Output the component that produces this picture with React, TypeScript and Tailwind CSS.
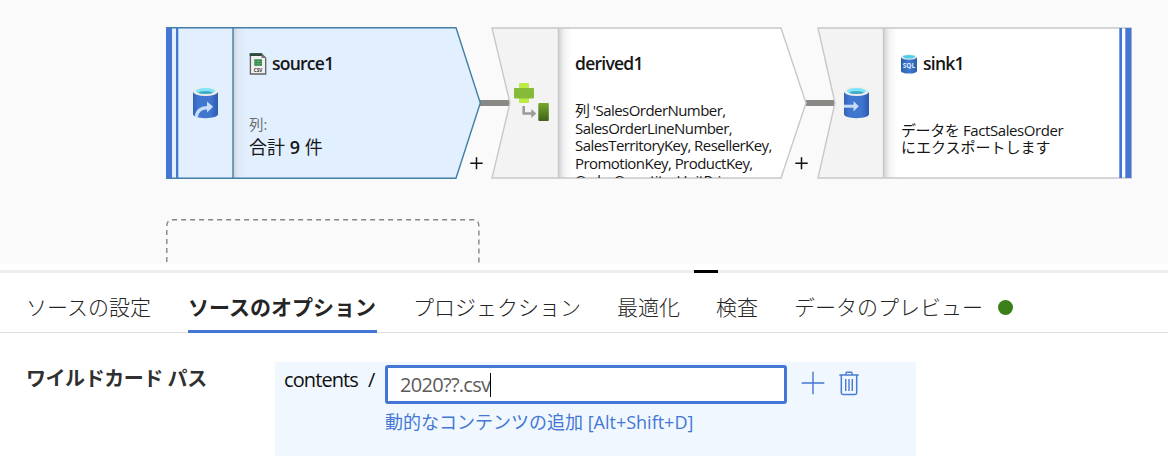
import type { ReactNode } from "react";

const latin = "font-['Open_Sans','Noto_Sans_CJK_JP',sans-serif]";
const nodeTitle = "font-['Open_Sans',sans-serif] h-[22px] text-[17.500px] font-semibold leading-[20px] tracking-[-0.75px]";

function Cylinder({ id, children }: { id: string; children?: ReactNode }) {
  return (
    <svg viewBox="0 0 25 32" className="h-8 w-[25px]">
      <defs>
        <linearGradient id={id}>
          <stop offset="0" stopColor="#3561b4" />
          <stop offset=".2" stopColor="#4075d0" />
          <stop offset=".7" stopColor="#4075d0" />
          <stop offset="1" stopColor="#2f5caf" />
        </linearGradient>
      </defs>
      <path d="M0 5V27.300C0 29.600 5.600 31.200 12.500 31.200S25 29.600 25 27.300V5Z" fill={`url(#${id})`} />
      <ellipse cx="12.500" cy="4.500" rx="12.400" ry="4.500" fill="#ececeb" />
      <ellipse cx="12.500" cy="4" rx="9.700" ry="2.900" fill="#7fe6fa" />
      <path d="M5 5.700C8 3.900 17 3.900 20 5.700C17 7.300 8 7.300 5 5.700Z" fill="#3fa6c4" />
      {children}
    </svg>
  );
}

function CsvIcon() {
  return (
    <svg viewBox="0 0 18 22" className="h-[22px] w-[18px]">
      <path d="M1.400 1H12.500L16.700 5V21H1.400Z" fill="#f0f0ef" stroke="#5d6161" strokeWidth="1.300" />
      <path d="M.7.300H12.800L14.200 3H.7Z" fill="#2c4a3a" />
      <path d="M12.500 1V5H16.700Z" fill="#777" />
      <rect x="5.300" y="6.300" width="7.700" height="6.500" fill="#2f8a4a" />
      <path d="M5.300 8.500H13M5.300 10.700H13M9.200 6.300V12.800" stroke="#6db681" strokeWidth=".6" />
      <text x="9" y="18.500" textAnchor="middle" fontSize="4.600" fontWeight="700" fontFamily="Open Sans" fill="#333">CSV</text>
    </svg>
  );
}

function SqlIcon() {
  return (
    <svg viewBox="0 0 16 20" className="h-5 w-4">
      <defs>
        <linearGradient id="sql">
          <stop offset="0" stopColor="#2b5fae" />
          <stop offset=".5" stopColor="#3f7ad0" />
          <stop offset="1" stopColor="#2b5fae" />
        </linearGradient>
      </defs>
      <path d="M0 3V17C0 18.500 3.600 19.600 8 19.600S16 18.500 16 17V3Z" fill="url(#sql)" />
      <ellipse cx="8" cy="3" rx="8" ry="2.800" fill="#e4ebee" />
      <ellipse cx="8" cy="2.700" rx="6" ry="1.800" fill="#4fcde5" />
      <text x="8" y="13.500" textAnchor="middle" fontSize="6.500" fontWeight="700" fontFamily="Open Sans" fill="#dfeaf8">SQL</text>
    </svg>
  );
}

function DerivedIcon() {
  return (
    <svg viewBox="0 0 36 40" className="h-10 w-9">
      <defs>
        <linearGradient id="leaf" x2="0" y2="1">
          <stop stopColor="#76a82f" />
          <stop offset="1" stopColor="#3f6217" />
        </linearGradient>
      </defs>
      <rect x="5" y="0" width="10" height="20" rx="1" fill="#bcec44" />
      <rect x="0" y="5" width="20" height="10.500" rx="1" fill="#86bb3a" />
      <path d="M9.700 23V30.500H19" fill="none" stroke="#9b9b9b" strokeWidth="2.600" />
      <path d="M17.300 26L22.300 30.500L17.300 35Z" fill="#9b9b9b" />
      <rect x="24.300" y="20" width="10.500" height="18" rx="1" fill="url(#leaf)" />
    </svg>
  );
}

function Plus() {
  return (
    <svg viewBox="0 0 13 13" className="size-[13px]">
      <path d="M6.500 .3V12.300M.3 6.300H12.700" stroke="#111" strokeWidth="1.500" />
    </svg>
  );
}

function Connector() {
  return <div className="h-1.5 w-[30px] bg-[#888884]" />;
}

function Trash() {
  return (
    <svg viewBox="0 0 20 25" className="h-[25px] w-5" fill="none" stroke="#4a7bd2">
      <path d="M.3 4H19.700" strokeWidth="1.500" />
      <path d="M7 4V2.100Q7 1.300 7.800 1.300H12.200Q13 1.300 13 2.100V4" strokeWidth="1.400" />
      <path d="M2.300 4V21.800Q2.300 23.500 4 23.500H16Q17.700 23.500 17.700 21.800V4" strokeWidth="1.500" />
      <path d="M6.700 8V20M10 8V20M13.300 8V20" strokeWidth="1.400" />
    </svg>
  );
}

function Canvas() {
  return (
    <section className="relative h-[264px] overflow-hidden bg-[#fafafa] text-[#161616]">
      <div className="absolute left-[480px] top-[100px]"><Connector /></div>
      <div className="absolute left-[806px] top-[100px]"><Connector /></div>

      <article className="absolute left-[166px] top-[27px] flex h-[152px] w-[316px]">
        <svg viewBox="0 0 316 152" className="absolute inset-0 h-[152px] w-[316px]">
          <defs>
            <linearGradient id="shadeBlue"><stop stopColor="#ccd3dc" /><stop offset=".4" stopColor="#dfe9f5" /><stop offset="1" stopColor="#e1efff" /></linearGradient>
          </defs>
          <path d="M.7.800H290L314.300 76L290 151.200H.7Z" fill="#e1effe" />
          <rect x="67" y="1" width="14" height="150" fill="url(#shadeBlue)" />
          <path d="M.7.800H290L314.300 76L290 151.200H.7Z" fill="none" stroke="#427fa5" strokeWidth="1.400" />
          <path d="M67 1V151" stroke="#427fa5" strokeWidth="1.400" />
          <path d="M0 1H6V151H0ZM10 1H12.300V151H10Z" fill="#4377d3" />
        </svg>
        <div className="relative flex w-[67px] pl-[27px] pt-[60px]">
          <Cylinder id="cylSource">
            <path d="M3.300 30C4 24 8 20.600 14 20.700" fill="none" stroke="#c7dcf7" strokeWidth="3.400" />
            <path d="M14 14.500L20.200 19.800L14 25.500Z" fill="#c7dcf7" />
          </Cylinder>
        </div>
        <div className="relative pl-[16px] pt-[26px]">
          <div className="flex h-[22px] items-center gap-[5px]">
            <CsvIcon />
            <h2 className={nodeTitle}>source1</h2>
          </div>
          <p className={`${latin} mt-[41px] text-[14.500px] leading-[18px] text-[#6c6c6c]`}>列:</p>
          <p className={`${latin} mt-[2px] whitespace-pre text-[18px] leading-[22px]`}>合計 <b className="font-semibold">9</b> 件</p>
        </div>
      </article>
      <div className="absolute left-[470px] top-[157px]"><Plus /></div>

      <article className="absolute left-[491px] top-[27px] flex h-[152px] w-[316px] overflow-hidden">
        <svg viewBox="0 0 316 152" className="absolute inset-0 h-[152px] w-[316px]">
          <defs>
            <linearGradient id="shadeGray"><stop stopColor="#d5d5d5" /><stop offset=".4" stopColor="#f2f2f2" /><stop offset="1" stopColor="#fff" /></linearGradient>
          </defs>
          <path d="M1 1H290L315 76L290 151H1L19 76Z" fill="#fff" />
          <path d="M1 1H67V151H1L19 76Z" fill="#f3f3f3" />
          <rect x="68" y="1" width="13" height="150" fill="url(#shadeGray)" />
          <path d="M1 1H290L315 76L290 151H1L19 76ZM67.500 1V151" fill="none" stroke="#c8c8c8" strokeWidth="1.400" />
        </svg>
        <div className="relative w-[68px] pl-[23px] pt-[56px]"><DerivedIcon /></div>
        <div className="relative h-[151px] overflow-hidden pl-[16px] pt-[26px]">
          <h2 className={nodeTitle}>derived1</h2>
          <p className={`${latin} mt-[27px] whitespace-nowrap text-[15px] leading-[17.6px] tracking-[-0.55px]`}>
            列 'SalesOrderNumber,<br />SalesOrderLineNumber,<br />SalesTerritoryKey, ResellerKey,<br />PromotionKey, ProductKey,<br />OrderQuantity, UnitPrice,
          </p>
        </div>
      </article>
      <div className="absolute left-[795px] top-[157px]"><Plus /></div>

      <article className="absolute left-[817px] top-[27px] flex h-[152px] w-[316px]">
        <svg viewBox="0 0 316 152" className="absolute inset-0 h-[152px] w-[316px]">
          <path d="M1 1H314.300V151H1L18 76Z" fill="#fff" />
          <path d="M1 1H66.500V151H1L18 76Z" fill="#f3f3f3" />
          <rect x="67" y="1" width="13" height="150" fill="url(#shadeGray)" />
          <path d="M1 1H314.300V151H1L18 76ZM66.500 1V151" fill="none" stroke="#c8c8c8" strokeWidth="1.400" />
          <path d="M302.300 1H305V151H302.300ZM308.300 1H314.300V151H308.300Z" fill="#4377d3" />
        </svg>
        <div className="relative w-[67px] pl-[27px] pt-[60px]">
          <Cylinder id="cylSink">
            <path d="M0 17.700H10V20.700H0Z" fill="#c7dcf7" />
            <path d="M9.500 13.900L14.800 19.200L9.500 24.500Z" fill="#c7dcf7" />
          </Cylinder>
        </div>
        <div className="relative pl-[17px] pt-[26px]">
          <div className="flex h-[22px] items-center gap-[6px]">
            <SqlIcon />
            <h2 className={nodeTitle}>sink1</h2>
          </div>
          <p className={`${latin} mt-[47px] whitespace-nowrap text-[15px] leading-[17px] tracking-[-0.4px]`}>データを FactSalesOrder<br /><span className="tracking-[0]">にエクスポートします</span></p>
        </div>
      </article>

      <svg viewBox="0 0 316 46" className="absolute left-[165px] top-[218px] h-[46px] w-[316px]">
        <path d="M1.800 46V8Q1.800 1.700 8 1.700H307.500Q313.900 1.700 313.900 8V46" fill="none" stroke="#858585" strokeWidth="1.400" strokeDasharray="5 4" strokeDashoffset="7" />
      </svg>
    </section>
  );
}

function Tabs() {
  const item = "flex h-[59px] items-center whitespace-nowrap pt-[6px] text-[21px] leading-[30px]";
  return (
    <nav className="flex h-[60px] gap-9 border-b border-[#dedede] pl-[26px] font-['Noto_Sans_CJK_JP',sans-serif] font-light text-[#252525]">
      <span className={item}><span className="w-[126px]">ソースの設定</span></span>
      <span className="flex h-[60px] w-[189px] items-center whitespace-nowrap border-b-[3px] border-[#4377d3] pt-[8px] text-[21px] font-bold leading-[30px]">ソースのオプション</span>
      <span className={item}><span className="w-[168px]">プロジェクション</span></span>
      <span className={item}><span className="w-[63px]">最適化</span></span>
      <span className={item}><span className="w-[42px]">検査</span></span>
      <span className={item}><span className="w-[188px]">データのプレビュー</span><i className="ml-4 mt-[3px] size-[15px] rounded-full bg-[#3a7f17]" /></span>
    </nav>
  );
}

export default function App() {
  return (
    <main className="h-[463px] w-[1168px] overflow-hidden bg-white">
      <Canvas />
      <div className="mt-1.5 flex h-[3px] bg-[#eee] pl-[694px]"><div className="w-6 bg-black" /></div>
      <Tabs />
      <section className="flex pt-[29px]">
        <h3 className={`${latin} w-[275px] whitespace-nowrap pl-[26px] pt-[3px] text-[20px] font-bold leading-7 tracking-[-0.45px] text-[#303030]`}>ワイルドカード パス</h3>
        <div className={`${latin} h-[94px] w-[641px] bg-[#f0f7ff] pt-[3px]`}>
          <div className="flex h-[39px]">
            <div className="flex w-[110px] pl-[9px] pt-[2px] text-[20px] leading-[26px] text-[#101010]">
              <span className="w-[84px] tracking-[-0.9px]">contents</span><span>/</span>
            </div>
            <div className="flex h-[39px] w-[402px] items-center rounded-[3px] border-[3px] border-[#4377d3] bg-white pl-3 text-[20px] text-[#5c5c5c]">
              <span className="tracking-[-0.7px]">2020??.csv</span><i className="h-6 w-px bg-black" />
            </div>
            <svg viewBox="0 0 24 24" className="ml-[14px] mt-[6px] size-6"><path d="M12 .7V23.300M.7 12H23.300" stroke="#4377d3" strokeWidth="1.400" /></svg>
            <div className="ml-[14px] mt-[6px]"><Trash /></div>
          </div>
          <p className="mt-[6px] pl-[110px] text-[18px] leading-6 text-[#4377d3]">動的なコンテンツの追加 [Alt+Shift+D]</p>
        </div>
      </section>
    </main>
  );
}
